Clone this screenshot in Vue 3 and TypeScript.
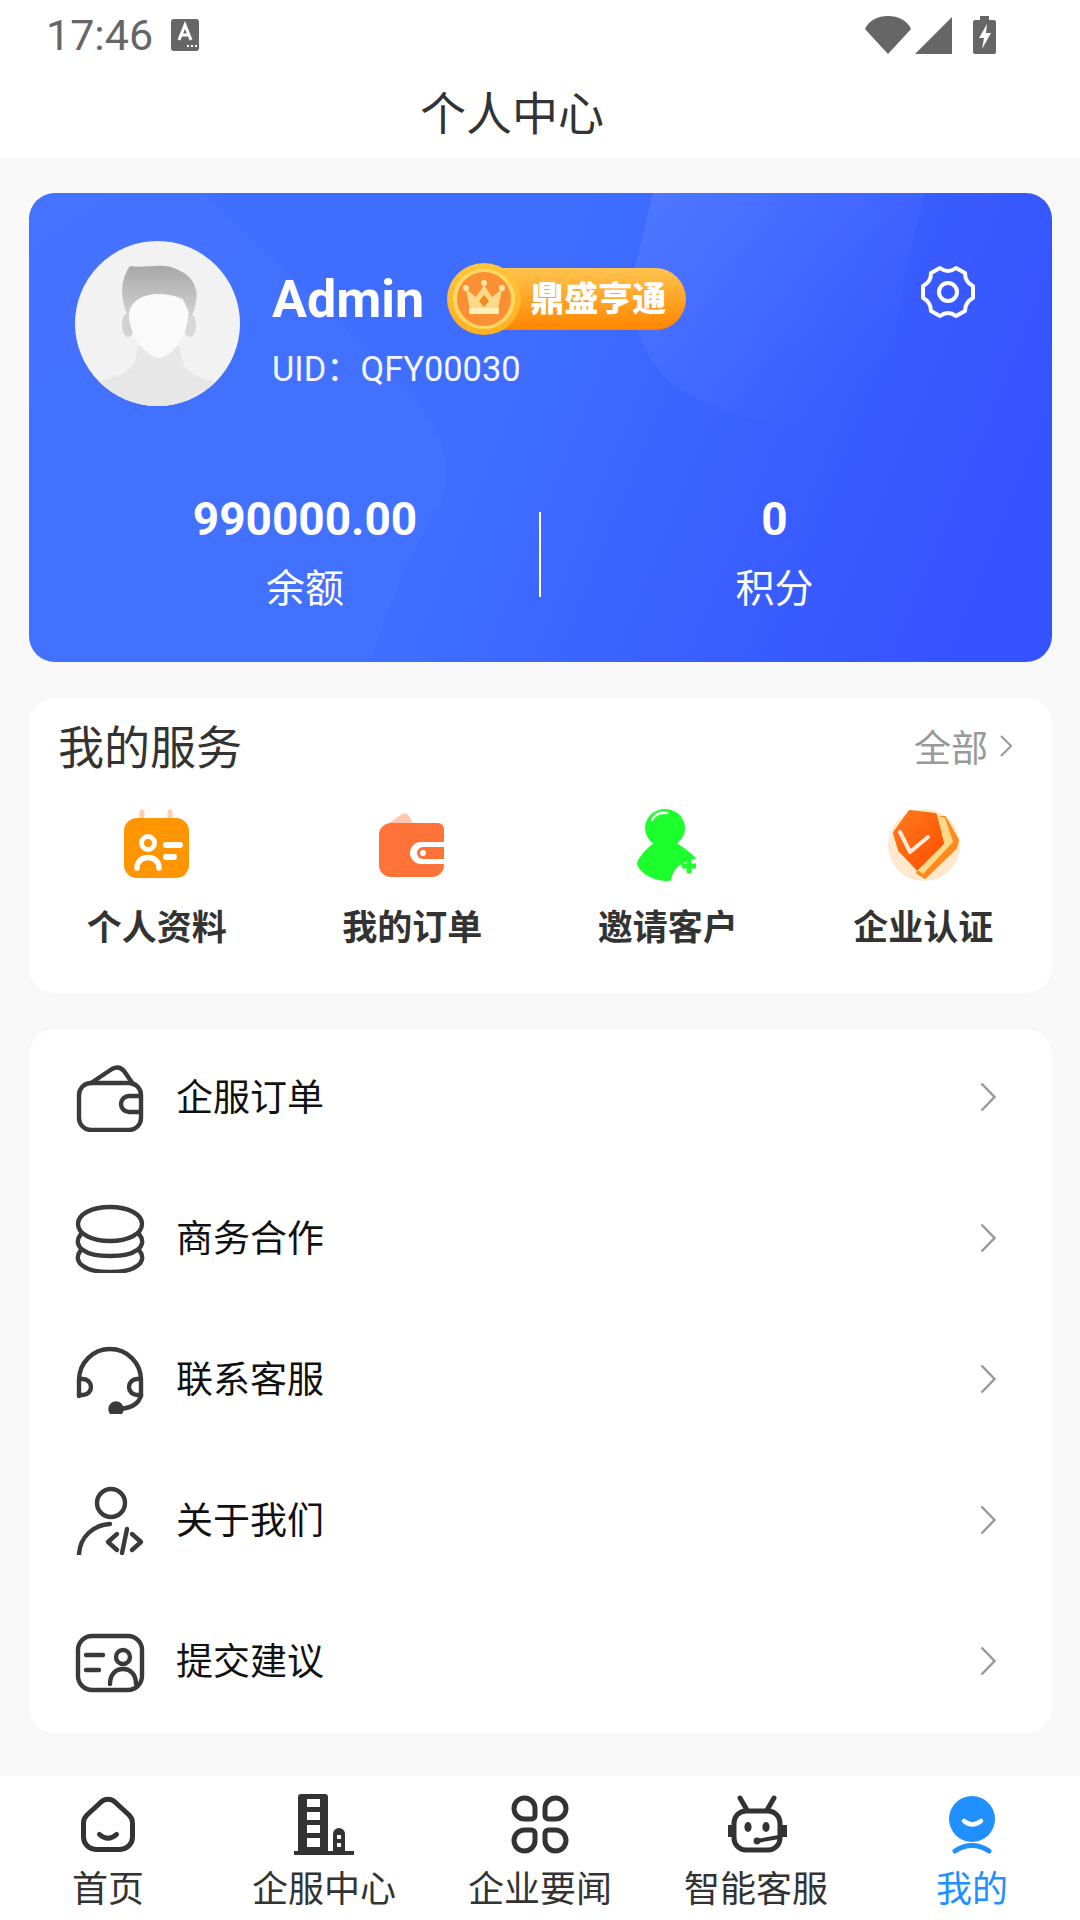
<template>
  <div class="page">
    <header class="top">
      <div class="status">
        <span class="time">17:46</span>
        <svg class="a-icon" viewBox="0 0 28 32" width="28" height="32">
          <rect width="28" height="32" rx="3" fill="#666" />
          <path d="M8 21 L14 6 L20 21 M10 16 H18" fill="none" stroke="#fff" stroke-width="3" />
          <path d="M16 27 h2 M20 27 h2 M24 27 h2" stroke="#fff" stroke-width="2" />
        </svg>
        <span class="grow"></span>
        <svg viewBox="0 0 46 38" width="46" height="38" class="wifi">
          <path d="M0 13 C4 4 13 0 23 0 C33 0 42 4 46 13 L23 38 Z" fill="#666" />
        </svg>
        <svg viewBox="0 0 37 37" width="37" height="37" class="signal">
          <path d="M37 0 V37 H0 Z" fill="#666" />
        </svg>
        <svg viewBox="0 0 23 38" width="23" height="38" class="battery">
          <path d="M7 0 H16 V4 H21 a2 2 0 0 1 2 2 V36 a2 2 0 0 1 -2 2 H2 a2 2 0 0 1 -2 -2 V6 a2 2 0 0 1 2 -2 H7 Z" fill="#666" />
          <path d="M14 8 L6 22 H11 L9 33 L18 17 H13 Z" fill="#fff" />
        </svg>
      </div>
      <div class="title">个人中心</div>
    </header>

    <main class="main">
      <section class="hero">
        <svg class="hero-deco" viewBox="0 0 1023 469" width="1023" height="469">
          <defs>
            <linearGradient id="decoA" x1="0" y1="0" x2="0.6" y2="1">
              <stop offset="0" stop-color="#fff" stop-opacity="0.03" />
              <stop offset="1" stop-color="#fff" stop-opacity="0.015" />
            </linearGradient>
            <linearGradient id="decoB" x1="0" y1="0" x2="1" y2="1">
              <stop offset="0" stop-color="#fff" stop-opacity="0.09" />
              <stop offset="0.8" stop-color="#fff" stop-opacity="0" />
            </linearGradient>
          </defs>
          <path d="M0 0 H176 L372 190 C412 230 425 270 412 310 L378 370 L340 469 H0 Z" fill="url(#decoA)" />
          <path d="M624 0 L606 74 C602 100 604 122 611 144 C625 180 650 200 690 216 C730 232 790 240 850 236 L877 74 L896 0 Z" fill="url(#decoB)" />
        </svg>

        <div class="profile">
          <svg class="avatar" viewBox="0 0 165 165" width="165" height="165">
            <defs>
              <linearGradient id="hair" x1="0" y1="0" x2="0" y2="1">
                <stop offset="0" stop-color="#a8a8a8" />
                <stop offset="1" stop-color="#d2d2d2" />
              </linearGradient>
              <clipPath id="avatarClip"><circle cx="82.5" cy="82.5" r="82.5" /></clipPath>
            </defs>
            <circle cx="82.5" cy="82.5" r="82.5" fill="#f2f2f2" />
            <g clip-path="url(#avatarClip)">
              <path d="M62 105 C62 122 60 130 30 139 L10 145 V165 H155 V145 L130 138 C110 132 105 120 105 105 Z" fill="#e7e7e7" />
              <ellipse cx="53" cy="84" rx="6" ry="12" fill="#d2d2d2" />
              <ellipse cx="115" cy="84" rx="6" ry="12" fill="#d8d8d8" />
              <path d="M55 25 C70 28 90 20 105 30 C118 35 124 50 121 60 C120 68 118 72 116 76 L108 58 C90 50 70 56 58 76 L53 75 C46 60 44 40 55 25 Z" fill="url(#hair)" />
              <path d="M54 72 C56 60 68 53 84 53 C100 53 112 60 113 72 C114 92 98 116 84 117 C70 116 53 92 54 72 Z" fill="#fafafa" />
            </g>
          </svg>
          <div class="who">
            <div class="name-row">
              <span class="name">Admin</span>
              <div class="badge">
                <svg class="coin" viewBox="0 0 76 72" width="76" height="72">
                  <defs>
                    <linearGradient id="coinRim" x1="0" y1="0" x2="0" y2="1">
                      <stop offset="0" stop-color="#ffc63c" />
                      <stop offset="1" stop-color="#ffb020" />
                    </linearGradient>
                  </defs>
                  <ellipse cx="38" cy="36" rx="37" ry="36" fill="url(#coinRim)" />
                  <ellipse cx="38" cy="36" rx="31" ry="30" fill="#ffd768" />
                  <ellipse cx="38" cy="36" rx="27" ry="27" fill="#fb8f33" />
                  <path d="M24 47 L20 26 L30 34 L38 22 L46 34 L56 26 L52 47 Z" fill="#ffd98a" />
                  <circle cx="20" cy="25" r="3" fill="#ffe6a8" />
                  <circle cx="38" cy="20" r="3" fill="#ffe6a8" />
                  <circle cx="56" cy="25" r="3" fill="#ffe6a8" />
                  <rect x="23" y="45" width="30" height="6" rx="1" fill="#fff0b8" />
                  <path d="M38 32 L43 38 L38 44 L33 38 Z" fill="#f28a1c" />
                </svg>
                <span class="badge-text">鼎盛亨通</span>
              </div>
            </div>
            <div class="uid">UID：QFY00030</div>
          </div>
          <svg class="gear" viewBox="0 0 56 56" width="56" height="56" fill="none" stroke="#fff" stroke-width="4" stroke-linejoin="round">
            <path d="M20 4 Q28 10 36 4 L45 9 Q45 18 53 22 V34 Q45 38 45 47 L36 52 Q28 46 20 52 L11 47 Q11 38 3 34 V22 Q11 18 11 9 Z" />
            <circle cx="28" cy="28" r="9" />
          </svg>
        </div>

        <div class="stats">
          <div class="stat">
            <div class="stat-num">990000.00</div>
            <div class="stat-label">余额</div>
          </div>
          <div class="stat-line"></div>
          <div class="stat">
            <div class="stat-num">0</div>
            <div class="stat-label">积分</div>
          </div>
        </div>
      </section>

      <section class="card services">
        <div class="services-head">
          <span class="services-title">我的服务</span>
          <span class="more">全部
            <svg viewBox="0 0 12 22" width="12" height="22" fill="none" stroke="#999" stroke-width="2"><path d="M1 1 L11 11 L1 21" /></svg>
          </span>
        </div>
        <div class="services-grid">
          <div class="service">
            <svg viewBox="0 0 80 80" width="80" height="80">
              <path d="M25 6 V14 M53 6 V14" stroke="#ffcdb0" stroke-width="5" stroke-linecap="round" />
              <rect x="7" y="12" width="65" height="60" rx="13" fill="#ff9500" />
              <circle cx="31" cy="37" r="6.5" fill="none" stroke="#fff" stroke-width="5" />
              <path d="M20 62 C20 48 42 48 42 62" fill="none" stroke="#fff" stroke-width="5.5" stroke-linecap="round" />
              <path d="M49 39 H63 M49 51 H57" stroke="#fff" stroke-width="6" stroke-linecap="round" />
            </svg>
            <span>个人资料</span>
          </div>
          <div class="service">
            <svg viewBox="0 0 80 80" width="80" height="80">
              <path d="M13 20 L30 8 Q34 6 36 9 L43 20 Z" fill="#ffc7b0" />
              <path d="M19 17 H66 a6 6 0 0 1 6 6 V59 a12 12 0 0 1 -12 12 H19 a12 12 0 0 1 -12 -12 V29 a12 12 0 0 1 12 -12 Z" fill="#ff7338" />
              <path d="M72 36 H49 a11 11 0 0 0 0 22 H72 Z" fill="#fff" />
              <path d="M72 41 H51 a6 6 0 0 0 0 12 H72 Z" fill="#ff7338" />
              <circle cx="51" cy="47" r="3" fill="#fff" />
            </svg>
            <span>我的订单</span>
          </div>
          <div class="service">
            <svg viewBox="0 0 80 80" width="80" height="80">
              <ellipse cx="37" cy="22" rx="20" ry="19" fill="#1cff2c" />
              <path d="M24 14 C27 8 33 6 39 7" fill="none" stroke="#fff" stroke-width="2.5" stroke-linecap="round" />
              <path d="M26 37 C16 44 9 54 9 58 C12 68 26 75 40 75 L52 72 L68 52 C62 46 54 40 48 37 C42 41 32 41 26 37 Z" fill="#1cff2c" />
              <path d="M43 76 C44 64 50 56 72 52 L72 78 Z" fill="#fff" />
              <path d="M61 53 V67 M54 60 H68" stroke="#1cff2c" stroke-width="5" />
            </svg>
            <span>邀请客户</span>
          </div>
          <div class="service">
            <svg viewBox="0 0 80 80" width="80" height="80">
              <defs>
                <linearGradient id="shield" x1="0" y1="0" x2="1" y2="1">
                  <stop offset="0" stop-color="#ff7a1c" />
                  <stop offset="1" stop-color="#ff4e00" />
                </linearGradient>
              </defs>
              <circle cx="41" cy="39" r="36" fill="#ffe8cc" />
              <path d="M55 11 L62 11 L75 34 L73 42 L42 72 L34 67 Z" fill="#ff8a1e" stroke="#ff8a1e" stroke-width="2" stroke-linejoin="round" />
              <path d="M52 9 L62 12 L70 36 L40 68 L33 63 L60 36 Z" fill="#ffd98a" />
              <path d="M27 6 L52 9 L59 37 L34 62 L17 44 L12 27 Z" fill="url(#shield)" stroke="url(#shield)" stroke-width="4" stroke-linejoin="round" />
              <path d="M17 26 L27 46 L45 31" fill="none" stroke="#ffe9d8" stroke-width="4" stroke-linejoin="round" stroke-linecap="round" />
            </svg>
            <span>企业认证</span>
          </div>
        </div>
      </section>

      <section class="card list">
        <div v-for="row in rows" :key="row.label" class="row">
          <svg class="row-icon" viewBox="0 0 70 70" width="70" height="70" fill="none" stroke="#3a3a3a" stroke-width="4.4" stroke-linecap="round" stroke-linejoin="round">
            <path v-for="d in row.paths" :key="d" :d="d" />
            <circle v-if="row.dot" :cx="row.dot[0]" :cy="row.dot[1]" :r="row.dot[2]" :fill="row.dot[3] ? '#3a3a3a' : 'none'" />
          </svg>
          <span class="row-label">{{ row.label }}</span>
          <svg class="row-arrow" viewBox="0 0 16 30" width="16" height="30" fill="none" stroke="#999" stroke-width="2.4"><path d="M1.5 1.5 L14.5 15 L1.5 28.5" /></svg>
        </div>
      </section>
    </main>

    <nav class="tabbar">
      <div class="tab">
        <svg viewBox="0 0 64 64" width="64" height="64" fill="none" stroke="#333" stroke-width="5" stroke-linecap="round" stroke-linejoin="round">
          <path d="M24 10 C28 5 36 5 40 10 L53 22 C55.5 24.5 56.5 27 56.5 30 V44 a12.5 12.5 0 0 1 -12.5 12.5 H20 a12.5 12.5 0 0 1 -12.5 -12.5 V30 C7.5 27 8.5 24.5 11 22 Z" />
          <path d="M23.5 41.5 Q32 49 40.5 41.5" />
        </svg>
        <span>首页</span>
      </div>
      <div class="tab">
        <svg viewBox="0 0 64 64" width="64" height="64">
          <path d="M6 4 a3 3 0 0 1 3 -3 H33 a3 3 0 0 1 3 3 V60 H6 Z" fill="#333" />
          <path d="M15 6 H28 V14 H15 Z M15 19 H28 V27 H15 Z M15 32 H28 V40 H15 Z M15 45 H28 V54 H15 Z" fill="#fff" />
          <path d="M41 58 V41 a6 6 0 0 1 12 0 V58" fill="#333" />
          <path d="M45 42 H49 V46 H45 Z M45 50 H49 V54 H45 Z" fill="#fff" />
          <path d="M2 58 H62 V62 H2 Z" fill="#333" />
        </svg>
        <span>企服中心</span>
      </div>
      <div class="tab">
        <svg viewBox="0 0 64 64" width="64" height="64" fill="none" stroke="#333" stroke-width="5" stroke-linejoin="round">
          <path d="M23.5 26 H17 A10.5 10.5 0 1 1 27 16 V22.5 a3.5 3.5 0 0 1 -3.5 3.5 Z" />
          <path d="M40.5 26 H47 A10.5 10.5 0 1 0 37 16 V22.5 a3.5 3.5 0 0 0 3.5 3.5 Z" />
          <path d="M23.5 37 H17 A10.5 10.5 0 1 0 27 47 V40.5 a3.5 3.5 0 0 0 -3.5 -3.5 Z" />
          <path d="M40.5 37 H47 A10.5 10.5 0 1 1 37 47 V40.5 a3.5 3.5 0 0 1 3.5 -3.5 Z" />
        </svg>
        <span>企业要闻</span>
      </div>
      <div class="tab">
        <svg viewBox="0 0 64 64" width="64" height="64" fill="none" stroke="#333" stroke-width="5" stroke-linecap="round">
          <path d="M16 5 L23 17 M50 5 L43 17" />
          <rect x="10" y="18" width="46" height="39" rx="12" />
          <path d="M4 32 H8 V44 H4 Z M58 32 H63 V44 H58 Z" fill="#333" stroke="none" />
          <ellipse cx="24" cy="34" rx="3.6" ry="5" fill="#333" stroke="none" />
          <ellipse cx="42" cy="34" rx="3.6" ry="5" fill="#333" stroke="none" />
          <path d="M33 48 L55 44" stroke-width="4" />
          <circle cx="33" cy="48" r="3.4" fill="#333" stroke="none" />
        </svg>
        <span>智能客服</span>
      </div>
      <div class="tab active">
        <svg viewBox="0 0 64 64" width="64" height="64" fill="none" stroke-linecap="round">
          <circle cx="32" cy="26" r="23" fill="#2090ff" />
          <path d="M24 28 Q32 35 41 28" stroke="#fff" stroke-width="4.5" />
          <path d="M15 58 Q32 47 49 58" stroke="#2090ff" stroke-width="5" />
        </svg>
        <span>我的</span>
      </div>
    </nav>
  </div>
</template>

<script setup lang="ts">
interface Row {
  label: string
  paths: string[]
  // cx, cy, r, filled
  dot?: [number, number, number, boolean]
}

const rows: Row[] = [
  {
    label: '企服订单',
    paths: [
      'M16 21 H54 a12 12 0 0 1 12 12 V56 a12 12 0 0 1 -12 12 H16 a12 12 0 0 1 -12 -12 V33 a12 12 0 0 1 12 -12 Z',
      'M16 21 L37 7 Q44 3 49 9 L58 22',
      'M66 34 H54 a8 8 0 0 0 0 16 H66',
    ],
  },
  {
    label: '商务合作',
    paths: [
      'M35 4 C53 4 67 11 67 21 C67 31 53 38 35 38 C17 38 3 31 3 21 C3 11 17 4 35 4 Z',
      'M6 31 C1 37 2 43 8 47 C18 55 52 55 62 47 C68 43 69 37 64 31',
      'M6 47 C1 53 2 59 8 63 C18 71 52 71 62 63 C68 59 69 53 64 47',
    ],
  },
  {
    label: '联系客服',
    paths: [
      'M4 52 V36 A31 31 0 0 1 66 36 V52',
      'M4 35 H8 a8 8 0 0 1 0 16 H4',
      'M66 35 H62 a8 8 0 0 0 0 16 H66',
      'M66 50 C65 60 55 65 42 65',
    ],
    dot: [41, 65, 5.5, true],
  },
  {
    label: '关于我们',
    paths: [
      'M4 69 C5 52 18 40 35 39',
      'M42 49 L33 57 L42 65',
      'M52 44 L47 68',
      'M57 49 L66 57 L57 65',
    ],
    dot: [36, 18, 14, false],
  },
  {
    label: '提交建议',
    paths: [
      'M17 10 H53 a14 14 0 0 1 14 14 V50 a14 14 0 0 1 -14 14 H17 a14 14 0 0 1 -14 -14 V24 a14 14 0 0 1 14 -14 Z',
      'M11 29 H28',
      'M11 44 H24',
      'M35 58 C35 48 41 43 48 43 C55 43 61 48 61 58',
    ],
    dot: [48, 31, 7, false],
  },
]
</script>

<style>
html,
body {
  margin: 0;
  background: #f8f8f8;
}
</style>

<style scoped>
.page {
  width: 1080px;
  height: 1920px;
  display: flex;
  flex-direction: column;
  overflow: hidden;
  background: #f8f8f8;
  font-family: Roboto, "Noto Sans CJK SC", sans-serif;
}

.top {
  height: 158px;
  background: #fff;
  display: flex;
  flex-direction: column;
}

.status {
  height: 70px;
  display: flex;
  align-items: center;
  padding: 0 84px 0 46px;
  color: #666;
}

.time {
  font-size: 43px;
  line-height: 70px;
}

.a-icon {
  margin-left: 18px;
}

.grow {
  flex: 1;
}

.signal {
  margin-left: 4px;
}

.battery {
  margin-left: 21px;
}

.title {
  text-align: center;
  font-size: 46px;
  line-height: 88px;
  color: #333;
  padding-right: 56px;
}

.main {
  flex: 1;
  padding: 35px 28px 0 29px;
  display: flex;
  flex-direction: column;
  gap: 36px;
}

.hero {
  position: relative;
  height: 469px;
  border-radius: 26px;
  overflow: hidden;
  color: #fff;
  background: linear-gradient(112deg, #3f6eff 0%, #3f6eff 45%, #3552ff 92%);
  flex-shrink: 0;
}

.hero-deco {
  position: absolute;
  left: 0;
  top: 0;
}

.profile {
  position: relative;
  display: flex;
  padding: 48px 0 0 46px;
}

.who {
  margin-left: 32px;
  padding-top: 22px;
}

.name-row {
  display: flex;
  align-items: center;
  height: 72px;
}

.name {
  font-size: 52px;
  font-weight: 700;
}

.badge {
  display: flex;
  align-items: center;
  margin-left: 22px;
}

.coin {
  position: relative;
  z-index: 1;
}

.badge-text {
  height: 62px;
  line-height: 62px;
  margin-left: -30px;
  padding: 0 20px 0 38px;
  border-radius: 0 31px 31px 0;
  background: linear-gradient(#ffc44e, #ff8500);
  font-size: 34px;
  font-weight: 900;
  white-space: nowrap;
}

.uid {
  margin-top: 12px;
  font-size: 34.4px;
  line-height: 44px;
  color: #f4f6ff;
}

.gear {
  position: absolute;
  left: 891px;
  top: 71px;
}

.stats {
  position: relative;
  display: flex;
  align-items: center;
  margin-top: 85px;
}

.stat {
  flex: 1;
  text-align: center;
}

.stat:first-child {
  flex: 0 0 510px;
  padding-left: 42px;
  box-sizing: border-box;
}

.stat:last-child {
  padding-right: 44px;
}

.stat-num {
  font-size: 46px;
  line-height: 56px;
  font-weight: 700;
}

.stat-label {
  margin-top: 14px;
  font-size: 39px;
  line-height: 56px;
}

.stat-line {
  width: 2px;
  height: 85px;
  background: #fff;
}

.card {
  background: #fff;
  border-radius: 26px;
  flex-shrink: 0;
}

.services {
  height: 295px;
  padding-top: 18px;
  box-sizing: border-box;
}

.services-head {
  display: flex;
  align-items: center;
  justify-content: space-between;
  height: 56px;
  padding: 0 40px 0 29px;
}

.services-title {
  font-size: 46px;
  color: #333;
}

.more {
  display: flex;
  align-items: center;
  gap: 12px;
  padding-top: 3px;
  font-size: 37px;
  color: #999;
}

.services-grid {
  display: grid;
  grid-template-columns: repeat(4, 255.5px);
  margin-top: 34px;
}

.service {
  display: flex;
  flex-direction: column;
  align-items: center;
  gap: 18px;
  font-size: 35px;
  line-height: 50px;
  font-weight: 700;
  color: #333;
}

.list {
  height: 704px;
}

.row {
  height: 141px;
  display: flex;
  align-items: center;
  padding: 0 56px 0 46px;
}

.row:first-child {
  margin-top: -3px;
}

.row-label {
  flex: 1;
  margin-left: 31px;
  padding-bottom: 3px;
  font-size: 37px;
  color: #111;
}

.tabbar {
  height: 144px;
  background: #fff;
  display: flex;
  flex-shrink: 0;
}

.tab {
  flex: 1;
  display: flex;
  flex-direction: column;
  align-items: center;
  padding-top: 17px;
  font-size: 36px;
  line-height: 50px;
  color: #333;
}

.tab svg {
  display: block;
}

.tab span {
  margin-top: 8px;
}

.tab.active {
  color: #2090ff;
}
</style>
